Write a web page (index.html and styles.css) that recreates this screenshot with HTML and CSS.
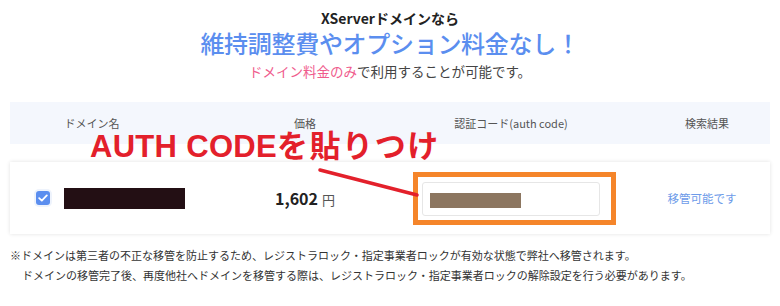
FILE: index.html
```html
<!DOCTYPE html>
<html lang="ja">
<head>
<meta charset="utf-8">
<link rel="stylesheet" href="styles.css">
</head>
<body>
<div class="page">
  <div class="intro">
    <p class="lead">XServerドメインなら</p>
    <h1 class="title">維持調整費やオプション料金なし！</h1>
    <p class="sub"><span class="pink">ドメイン料金のみ</span>で利用することが可能です。</p>
  </div>

  <div class="table">
    <div class="thead">
      <div class="th">ドメイン名</div>
      <div class="th">価格</div>
      <div class="th">認証コード(auth code)</div>
      <div class="th th-result">検索結果</div>
    </div>
    <div class="row">
      <div class="cell cell-domain">
        <span class="check"><svg width="10" height="8" viewBox="0 0 10 8"><path d="M1.2 4.2 L3.8 6.6 L8.8 1.4" fill="none" stroke="#fff" stroke-width="1.8" stroke-linecap="round" stroke-linejoin="round"/></svg></span>
        <span class="masked"></span>
      </div>
      <div class="cell cell-price"><span class="num">1,602</span><span class="yen">円</span></div>
      <div class="cell cell-code">
        <div class="frame"><div class="input"><span class="code-mask"></span></div></div>
      </div>
      <div class="cell cell-result">移管可能です</div>
    </div>
  </div>

  <div class="notes">
    <p class="note">※ドメインは第三者の不正な移管を防止するため、レジストラロック・指定事業者ロックが有効な状態で弊社へ移管されます。</p>
    <p class="note note-indent">ドメインの移管完了後、再度他社へドメインを移管する際は、レジストラロック・指定事業者ロックの解除設定を行う必要があります。</p>
  </div>

  <div class="annot-text"><span class="annot-latin">AUTH CODE</span><span class="annot-jp">を貼りつけ</span></div>
  <svg class="annot-line" width="780" height="306" viewBox="0 0 780 306"><line x1="320" y1="170" x2="417" y2="195" stroke="#e3202b" stroke-width="3.5" stroke-linecap="round"/></svg>
</div>
</body>
</html>
```

FILE: styles.css
```css
* { box-sizing: border-box; }
html, body { margin: 0; padding: 0; background: #fff; }
body {
  font-family: "Noto Sans CJK JP", "Noto Sans", sans-serif;
  color: #333;
  width: 780px;
  height: 306px;
  overflow: hidden;
}
.page {
  position: relative;
  padding: 10px 10px 0;
}
.intro { text-align: center; }
.lead {
  margin: 0;
  font-size: 14px;
  line-height: 17px;
  font-weight: 700;
  color: #222;
}
.title {
  margin: 1px 0 0;
  font-size: 24px;
  line-height: 30px;
  font-weight: 500;
  color: #5b8eef;
  letter-spacing: -0.3px;
}
.sub {
  margin: 3px 0 0;
  font-size: 13.5px;
  line-height: 20px;
  color: #444;
}
.pink { color: #ef5b8c; }

.table { margin-top: 21px; }
.thead, .row {
  display: grid;
  grid-template-columns: 164px 262px 150px 184px;
  align-items: center;
}
.thead {
  height: 42px;
  background: #f4f7fd;
}
.th {
  text-align: center;
  font-size: 11px;
  color: #555;
}
.th-result { padding-left: 58px; }

.row {
  margin-top: 18px;
  height: 72px;
  background: #fff;
  box-shadow: 0 0 4px rgba(0, 0, 0, 0.12);
}
.cell-domain {
  display: flex;
  align-items: center;
  padding-left: 26px;
  gap: 14px;
}
.check {
  flex: none;
  width: 14px;
  height: 14px;
  border-radius: 3px;
  background: #5b8eef;
  display: flex;
  align-items: center;
  justify-content: center;
  box-shadow: 0 0 0 2px #eef3fc;
  margin-top: -1px;
}
.masked {
  flex: none;
  width: 121px;
  height: 21px;
  background: #230f14;
}
.cell-price {
  display: flex;
  justify-content: center;
  align-items: baseline;
}
.num {
  font-size: 16px;
  font-weight: 700;
  color: #222;
}
.yen {
  font-size: 13px;
  color: #555;
  margin-left: 4px;
}
.cell-code {
  display: flex;
  justify-content: center;
}
.frame {
  flex: none;
  border: 5px solid #f5852a;
  padding: 5px 11px 4px 4px;
  margin-left: 7px;
}
.input {
  width: 178px;
  height: 34px;
  border: 1px solid #e6e6e6;
  border-radius: 3px;
  padding: 10px 0 0 7px;
}
.code-mask {
  display: block;
  width: 91px;
  height: 15px;
  background: #8c7660;
}
.cell-result {
  padding-left: 48px;
  text-align: center;
  font-size: 11.5px;
  color: #6d9be9;
}

.notes { margin-top: 11px; }
.note {
  margin: 0;
  font-size: 11px;
  line-height: 20px;
  color: #333;
  white-space: nowrap;
}
.note-indent { padding-left: 12px; }

.annot-text {
  position: absolute;
  left: 90px;
  top: 126px;
  font-size: 31px;
  line-height: 36px;
  font-weight: 700;
  color: #e3202b;
  white-space: nowrap;
}
.annot-latin {
  font-family: "Liberation Sans", "Noto Sans CJK JP", sans-serif;
  letter-spacing: 0.3px;
}
.annot-jp { letter-spacing: 1.5px; }
.annot-line {
  position: absolute;
  left: 0;
  top: 0;
  pointer-events: none;
}
```
